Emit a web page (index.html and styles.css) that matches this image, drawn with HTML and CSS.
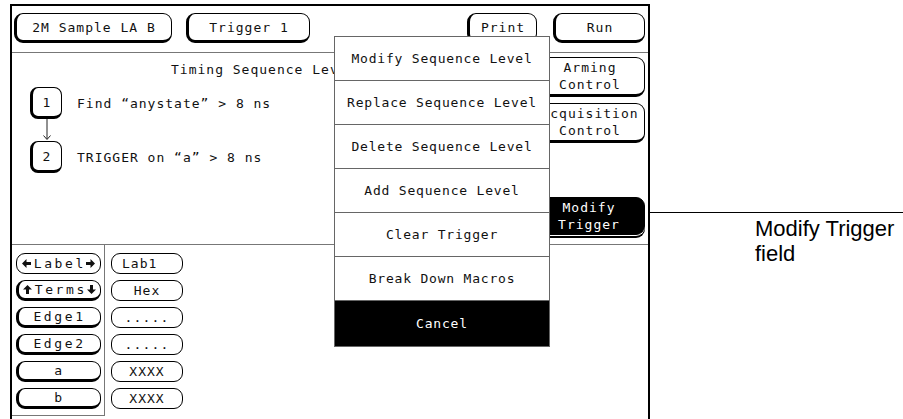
FILE: index.html
```html
<!DOCTYPE html>
<html lang="en">
<head>
    <meta charset="UTF-8">
    <meta name="viewport" content="width=device-width, initial-scale=1.0">
    <title>Trigger Menu</title>
    <link rel="stylesheet" href="styles.css">
</head>
<body>
<div class="page">
    <div class="screen">
        <div class="topbar">
            <div class="btn raised w-config">2M Sample LA B</div>
            <div class="btn raised w-trig">Trigger 1</div>
            <div class="btn raised w-print">Print</div>
            <div class="btn raised w-run">Run</div>
        </div>

        <div class="work">
            <div class="sequence">
                <div class="seq-title">Timing Sequence Levels</div>
                <div class="level">
                    <div class="level-num">1</div>
                    <span>Find “anystate” &gt; 8 ns</span>
                </div>
                <svg class="link" width="32" height="22" viewBox="0 0 32 22">
                    <path d="M17 0 V20 M13.5 16.5 L17 20.5 L20.5 16.5" fill="none" stroke="#222" stroke-width="1"/>
                </svg>
                <div class="level second">
                    <div class="level-num">2</div>
                    <span>TRIGGER on “a” &gt; 8 ns</span>
                </div>
            </div>
            <div class="side">
                <div class="btn raised side-btn">Arming<br>Control</div>
                <div class="btn raised side-btn">Acquisition<br>Control</div>
                <div class="btn side-btn active">Modify<br>Trigger</div>
            </div>
        </div>

        <div class="terms">
            <div class="label-col">
                <div class="btn tag">
                    <svg class="arr" width="9" height="9" viewBox="0 0 9 9"><path d="M0 4.5 L4.5 0 V3 H9 V6 H4.5 V9 Z"/></svg>
                    <span>Label</span>
                    <svg class="arr" width="9" height="9" viewBox="0 0 9 9"><path d="M9 4.5 L4.5 0 V3 H0 V6 H4.5 V9 Z"/></svg>
                </div>
                <div class="btn raised tag">
                    <svg class="arr" width="9" height="9" viewBox="0 0 9 9"><path d="M4.5 0 L9 4.5 H6 V9 H3 V4.5 H0 Z"/></svg>
                    <span>Terms</span>
                    <svg class="arr" width="9" height="9" viewBox="0 0 9 9"><path d="M4.5 9 L9 4.5 H6 V0 H3 V4.5 H0 Z"/></svg>
                </div>
                <div class="btn raised tag">Edge1</div>
                <div class="btn raised tag">Edge2</div>
                <div class="btn raised tag">a</div>
                <div class="btn raised tag">b</div>
            </div>
            <div class="value-col">
                <div class="btn val left">Lab1</div>
                <div class="btn val">Hex</div>
                <div class="btn val dots">.....</div>
                <div class="btn val dots">.....</div>
                <div class="btn val">XXXX</div>
                <div class="btn val">XXXX</div>
            </div>
        </div>

        <div class="menu">
            <div class="menu-item">Modify Sequence Level</div>
            <div class="menu-item">Replace Sequence Level</div>
            <div class="menu-item">Delete Sequence Level</div>
            <div class="menu-item">Add Sequence Level</div>
            <div class="menu-item">Clear Trigger</div>
            <div class="menu-item">Break Down Macros</div>
            <div class="menu-item cancel">Cancel</div>
        </div>
    </div>

    <div class="note">
        <p>Modify Trigger<br>field</p>
    </div>
</div>
</body>
</html>
```

FILE: styles.css
```css
* {
    box-sizing: border-box;
}
body {
    margin: 0;
    background: #fff;
    overflow: hidden;
    font-family: "DejaVu Sans Mono", "Liberation Mono", monospace;
    font-size: 13px;
    color: #111;
}
.page {
    display: flex;
    height: 419px;
    padding: 4px 0 0 10px;
}
.screen {
    position: relative;
    flex: none;
    width: 640px;
    height: 430px;
    border: 2px solid #000;
    border-bottom: none;
}

/* buttons */
.btn {
    display: flex;
    align-items: center;
    justify-content: center;
    text-align: center;
    line-height: 17px;
    letter-spacing: 1px;
    background: #fff;
    border: 1px solid #000;
    border-radius: 9px;
}
.raised {
    border-left-width: 3px;
    border-bottom-width: 3px;
}

/* top row */
.topbar {
    display: flex;
    align-items: flex-start;
    height: 47px;
    padding: 7px 3px 0 2px;
    border-bottom: 1px solid #777;
}
.w-config {
    width: 158px;
    height: 30px;
}
.w-trig {
    width: 124px;
    height: 30px;
    margin-left: 14px;
}
.w-print {
    width: 70px;
    height: 30px;
    margin-left: auto;
}
.w-run {
    width: 92px;
    height: 30px;
    margin-left: 16px;
}

/* sequence area */
.work {
    display: flex;
    height: 192px;
    border-bottom: 1px solid #777;
}
.sequence {
    flex: 1;
    padding: 9px 0 0 18px;
    letter-spacing: 1px;
}
.seq-title {
    padding-left: 141px;
    line-height: 16px;
}
.level {
    display: flex;
    align-items: center;
    gap: 15px;
    margin-top: 9px;
}
.level.second {
    margin-top: 0;
}
.level-num {
    display: flex;
    align-items: center;
    justify-content: center;
    width: 32px;
    height: 32px;
    border: 1px solid #000;
    border-left-width: 3px;
    border-bottom-width: 3px;
    border-radius: 8px;
}
.link {
    display: block;
}
.side {
    display: flex;
    flex-direction: column;
    gap: 6px;
    width: 112px;
    margin-right: 3px;
    padding-top: 4px;
}
.side-btn {
    height: 40px;
}
.side-btn.active {
    height: 38px;
    margin-top: 48px;
    background: #000;
    color: #fff;
    box-shadow: 0 1px 0 #fff, 0 3px 0 #000;
}

/* label / term list */
.terms {
    display: flex;
    align-items: flex-start;
}
.label-col {
    display: flex;
    flex-direction: column;
    gap: 6px;
    width: 93px;
    height: 171px;
    padding: 8px 0 0 4px;
    border-right: 1px solid #777;
    border-bottom: 1px solid #777;
}
.tag {
    width: 85px;
    height: 21px;
    letter-spacing: 2.6px;
}
.tag .arr {
    margin: 0 3px;
    fill: #111;
}
.tag span {
    margin-right: -2.6px;
}
.value-col {
    display: flex;
    flex-direction: column;
    gap: 6px;
    padding: 8px 0 0 6px;
}
.val {
    width: 72px;
    height: 21px;
}
.val.left {
    justify-content: flex-start;
    padding-left: 10px;
}
.val.dots {
    letter-spacing: 1.2px;
}

/* popup menu */
.menu {
    position: absolute;
    left: 322px;
    top: 30px;
    width: 216px;
    background: #fff;
    border: 1px solid #666;
}
.menu-item {
    display: flex;
    align-items: center;
    justify-content: center;
    height: 44px;
    letter-spacing: 0.8px;
    border-bottom: 1px solid #666;
}
.menu-item.cancel {
    height: 45px;
    background: #000;
    color: #fff;
    border-bottom: none;
}

/* callout */
.note {
    flex: 1;
    align-self: flex-start;
    margin-top: 208px;
    border-top: 1px solid #000;
    font-family: "Liberation Sans", Arial, sans-serif;
    font-size: 22px;
    line-height: 25px;
    color: #000;
}
.note p {
    margin: 0;
    padding: 3px 0 0 105px;
}
```
